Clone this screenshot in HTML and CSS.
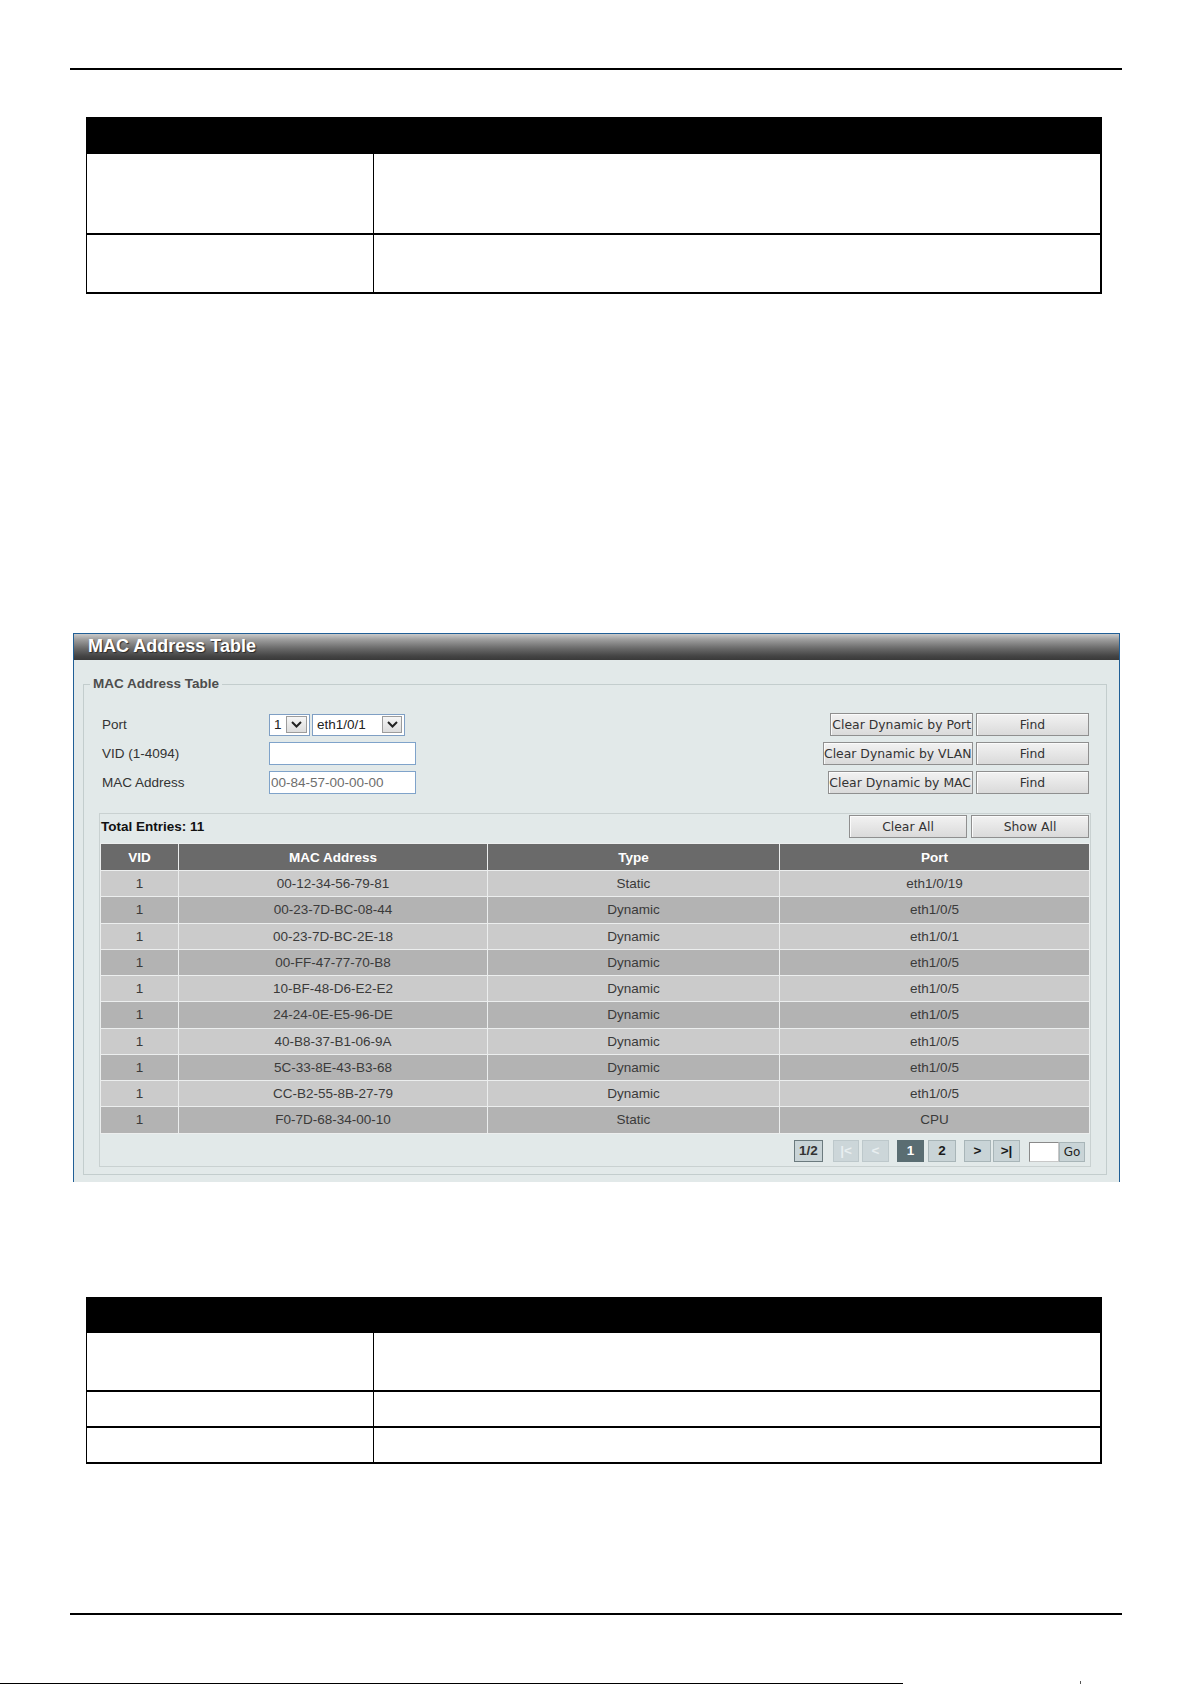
FILE: index.html
```html
<!DOCTYPE html>
<html lang="en">
<head>
<meta charset="utf-8">
<title>MAC Address Table</title>
<link rel="stylesheet" href="styles.css">
</head>
<body>
  <div class="rule rule-top"></div>

  <div class="doc-table doc-table-a">
    <div class="doc-head h37"></div>
    <div class="doc-cell key h81"></div><div class="doc-cell val h81"></div>
    <div class="doc-cell key h59"></div><div class="doc-cell val h59"></div>
  </div>

  <section class="panel">
    <div class="panel-title">MAC Address Table</div>
    <fieldset class="group">
      <legend>MAC Address Table</legend>
      <div class="form">
        <div class="form-row">
          <span class="label">Port</span>
          <span class="select sel-unit">1<span class="arrow"><svg width="11" height="7" viewBox="0 0 11 7"><polyline points="1,1 5.5,5.5 10,1" fill="none" stroke="#222" stroke-width="2"/></svg></span></span>
          <span class="select sel-port">eth1/0/1<span class="arrow"><svg width="11" height="7" viewBox="0 0 11 7"><polyline points="1,1 5.5,5.5 10,1" fill="none" stroke="#222" stroke-width="2"/></svg></span></span>
          <span class="actions">
            <button class="btn w-port">Clear Dynamic by Port</button>
            <button class="btn w-find">Find</button>
          </span>
        </div>
        <div class="form-row">
          <span class="label">VID (1-4094)</span>
          <input class="field" type="text" value="">
          <span class="actions">
            <button class="btn w-vlan">Clear Dynamic by VLAN</button>
            <button class="btn w-find">Find</button>
          </span>
        </div>
        <div class="form-row">
          <span class="label">MAC Address</span>
          <input class="field muted" type="text" value="00-84-57-00-00-00">
          <span class="actions">
            <button class="btn w-mac">Clear Dynamic by MAC</button>
            <button class="btn w-find">Find</button>
          </span>
        </div>
      </div>

      <div class="results">
        <div class="results-bar">
          <span class="total">Total Entries: 11</span>
          <span class="actions actions-wide">
            <button class="btn w-all">Clear All</button>
            <button class="btn w-all">Show All</button>
          </span>
        </div>
        <table class="grid">
          <colgroup>
            <col class="c-vid"><col class="c-mac"><col class="c-type"><col>
          </colgroup>
          <thead>
            <tr><th>VID</th><th>MAC Address</th><th>Type</th><th>Port</th></tr>
          </thead>
          <tbody>
            <tr><td>1</td><td>00-12-34-56-79-81</td><td>Static</td><td>eth1/0/19</td></tr>
            <tr><td>1</td><td>00-23-7D-BC-08-44</td><td>Dynamic</td><td>eth1/0/5</td></tr>
            <tr><td>1</td><td>00-23-7D-BC-2E-18</td><td>Dynamic</td><td>eth1/0/1</td></tr>
            <tr><td>1</td><td>00-FF-47-77-70-B8</td><td>Dynamic</td><td>eth1/0/5</td></tr>
            <tr><td>1</td><td>10-BF-48-D6-E2-E2</td><td>Dynamic</td><td>eth1/0/5</td></tr>
            <tr><td>1</td><td>24-24-0E-E5-96-DE</td><td>Dynamic</td><td>eth1/0/5</td></tr>
            <tr><td>1</td><td>40-B8-37-B1-06-9A</td><td>Dynamic</td><td>eth1/0/5</td></tr>
            <tr><td>1</td><td>5C-33-8E-43-B3-68</td><td>Dynamic</td><td>eth1/0/5</td></tr>
            <tr><td>1</td><td>CC-B2-55-8B-27-79</td><td>Dynamic</td><td>eth1/0/5</td></tr>
            <tr><td>1</td><td>F0-7D-68-34-00-10</td><td>Static</td><td>CPU</td></tr>
          </tbody>
        </table>
        <div class="pager">
          <span class="pg pg-count">1/2</span>
          <span class="pg pg-off pg-first">|&lt;</span>
          <span class="pg pg-off pg-prev">&lt;</span>
          <span class="pg pg-cur">1</span>
          <span class="pg pg-two">2</span>
          <span class="pg pg-next">&gt;</span>
          <span class="pg pg-last">&gt;|</span>
          <input class="pg-input" type="text" value="">
          <button class="pg-go">Go</button>
        </div>
      </div>
    </fieldset>
  </section>

  <div class="doc-table doc-table-b">
    <div class="doc-head h36"></div>
    <div class="doc-cell key h59"></div><div class="doc-cell val h59"></div>
    <div class="doc-cell key h36"></div><div class="doc-cell val h36"></div>
    <div class="doc-cell key h36"></div><div class="doc-cell val h36"></div>
  </div>

  <div class="rule rule-bottom"></div>

  <div class="cut">
    <span class="cut-line"></span>
    <span class="cut-tick"></span>
  </div>
</body>
</html>
```

FILE: styles.css
```css
* { box-sizing: border-box; }

html, body {
  margin: 0;
  padding: 0;
  background: #fff;
  overflow: hidden;
}

body {
  width: 1192px;
  height: 1684px;
  font-family: "Liberation Sans", Arial, sans-serif;
  font-size: 13.5px;
  color: #333;
}

/* page rules */
.rule {
  height: 2px;
  width: 1052px;
  margin-left: 70px;
  background: #000;
}
.rule-top { margin-top: 68px; }
.rule-bottom { margin-top: 149px; }

/* document parameter tables */
.doc-table {
  display: grid;
  grid-template-columns: 288px 1fr;
  width: 1016px;
  margin-left: 86px;
}
.doc-table-a { margin-top: 47px; }
.doc-table-b { margin-top: 115px; }

.doc-head {
  grid-column: 1 / -1;
  background: #000;
}
.doc-cell { border-bottom: 2px solid #000; }
.doc-cell.key {
  border-left: 1px solid #000;
  border-right: 1px solid #000;
}
.doc-cell.val { border-right: 2px solid #000; }

.h36 { height: 36px; }
.h37 { height: 37px; }
.h59 { height: 59px; }
.h81 { height: 81px; }

/* web UI panel */
.panel {
  width: 1047px;
  height: 549px;
  margin: 339px 0 0 73px;
  border: 1px solid #215f96;
  border-bottom: 0;
  background: #e2e9e9;
  overflow: hidden;
}

.panel-title {
  height: 26px;
  padding-left: 14px;
  line-height: 25px;
  font-size: 18px;
  font-weight: bold;
  color: #fff;
  text-shadow: 1px 1px 1px #2a2a2a;
  background: linear-gradient(to bottom, #cacaca 0%, #a0a0a0 20%, #6a6a6a 55%, #444 85%, #3a3a3a 100%);
}

.group {
  margin: 16px 12px 0 9px;
  padding: 0 0 7px 0;
  border: 1px solid #c3cdcd;
  min-width: 0;
}
.group legend {
  margin-left: 6px;
  padding: 0 3px;
  line-height: 16px;
  font-size: 13.5px;
  font-weight: bold;
  color: #4d4d4d;
}

.form {
  padding: 21px 17px 0 18px;
  display: flex;
  flex-direction: column;
  gap: 6px;
}
.form-row {
  display: flex;
  align-items: center;
  height: 23px;
}
.label {
  width: 167px;
  color: #333;
}

.select {
  display: flex;
  align-items: center;
  justify-content: space-between;
  height: 22px;
  padding: 0 2px 0 4px;
  background: #fff;
  border: 1px solid #7f9fc4;
  color: #222;
}
.sel-unit { width: 41px; }
.sel-port { width: 93px; margin-left: 2px; }
.sel-unit .arrow { width: 21px; }
.sel-port .arrow { width: 20px; }
.arrow {
  display: flex;
  align-items: center;
  justify-content: center;
  height: 17px;
  border: 1px solid #9c9c9c;
  background: linear-gradient(to bottom, #f6f6f6, #dcdcdc);
}

.field {
  width: 147px;
  height: 23px;
  margin: 0;
  padding: 0 0 0 1px;
  border: 1px solid #7fa3ca;
  background: #fff;
  font-family: "Liberation Sans", Arial, sans-serif;
  font-size: 13.5px;
  color: #222;
  outline: none;
}
.field.muted { color: #6e6e6e; }

.actions {
  display: flex;
  gap: 3px;
  margin-left: auto;
}
.actions-wide { gap: 4px; }

.btn {
  height: 23px;
  margin: 0;
  padding: 0;
  border: 1px solid #8f8f8f;
  box-shadow: inset 1px 1px 0 #fbfbfb;
  background: linear-gradient(to bottom, #f2f2f2, #dadada);
  font-family: "DejaVu Sans", Verdana, sans-serif;
  font-size: 12.4px;
  color: #333;
  white-space: nowrap;
  text-align: center;
}
.w-port { width: 143px; text-align: right; padding-right: 1px; }
.w-vlan { width: 150px; text-align: right; padding-right: 1px; }
.w-mac { width: 145px; text-align: right; padding-right: 1px; }
.w-find { width: 113px; }
.w-all { width: 118px; }

/* results area */
.results {
  margin: 19px 15px 0 15px;
  border: 1px solid #c9d1d1;
}
.results-bar {
  display: flex;
  align-items: center;
  height: 29px;
  padding: 0 1px 4px 1px;
}
.total {
  font-weight: bold;
  color: #111;
}

.grid {
  width: 100%;
  border-collapse: collapse;
  table-layout: fixed;
  text-align: center;
}
.c-vid { width: 78px; }
.c-mac { width: 309px; }
.c-type { width: 292px; }

.grid th,
.grid td {
  padding: 0;
  border: 1px solid #eceeee;
}
.grid thead tr { height: 27px; }
.grid th {
  background: #6a6a6a;
  color: #fff;
  font-weight: bold;
}
.grid tbody tr { height: 26.25px; }
.grid td { color: #3a3a3a; }
.grid tbody tr:nth-child(odd) td { background: #cbcbcb; }
.grid tbody tr:nth-child(even) td { background: #b3b3b3; }

/* pagination */
.pager {
  display: flex;
  justify-content: flex-end;
  align-items: center;
  height: 22px;
  margin: 6px 0 4px 0;
  padding-right: 5px;
}
.pg {
  display: flex;
  align-items: center;
  justify-content: center;
  height: 22px;
  border: 1px solid #a8b5b8;
  background: #c9d4d7;
  font-weight: bold;
  font-size: 13.5px;
  color: #1a1a1a;
}
.pg-count { width: 29px; margin-right: 10px; border-color: #6b7a7e; color: #333; }
.pg-off { color: #e8eef0; background: #ccd6d9; border-color: #bdc8cb; }
.pg-first { width: 26px; margin-right: 3px; }
.pg-prev { width: 27px; margin-right: 8px; }
.pg-cur { width: 27px; margin-right: 4px; background: #5a6d72; border-color: #5a6d72; color: #fff; }
.pg-two { width: 28px; margin-right: 8px; }
.pg-next { width: 27px; margin-right: 2px; }
.pg-last { width: 27px; margin-right: 9px; }
.pg-input {
  width: 30px;
  height: 20px;
  margin: 2px 0 0 0;
  padding: 0;
  border: 1px solid #c8c8c8;
  border-top-color: #8a8a8a;
  border-left-color: #8a8a8a;
  background: #fff;
  outline: none;
}
.pg-go {
  width: 26px;
  height: 20px;
  margin: 2px 0 0 0;
  padding: 0;
  border: 1px solid #a8b5b8;
  background: #c9d4d7;
  font-family: "DejaVu Sans", Verdana, sans-serif;
  font-size: 12px;
  color: #222;
}

/* page cut line at the bottom edge */
.cut {
  display: flex;
  align-items: flex-end;
  height: 3px;
  margin-top: 66px;
}
.cut-line {
  width: 903px;
  height: 1px;
  background: #000;
}
.cut-tick {
  width: 1px;
  height: 3px;
  margin-left: 177px;
  background: #555;
}
```
